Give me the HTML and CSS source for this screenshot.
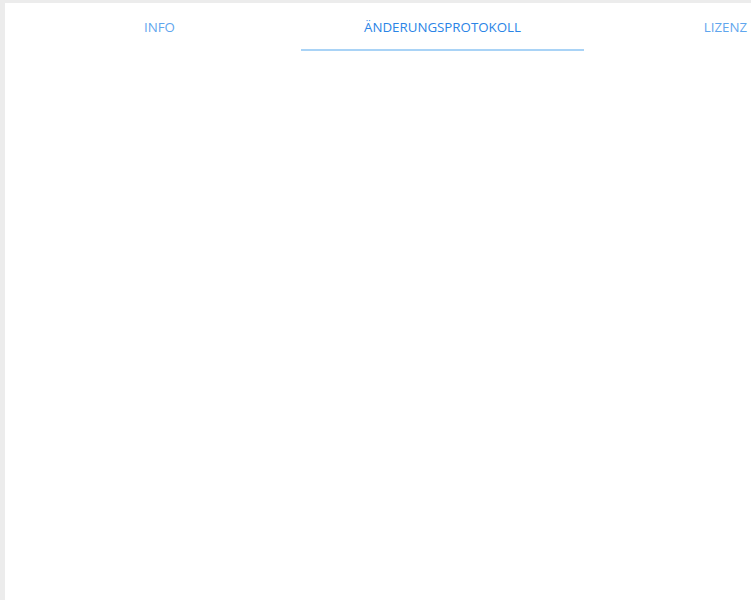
FILE: index.html
```html
<!DOCTYPE html>
<html lang="de">
<head>
<meta charset="utf-8">
<title>Tabs</title>
<link rel="stylesheet" href="styles.css">
</head>
<body>
<div class="panel">
  <nav class="tabs">
    <div class="tab">INFO</div>
    <div class="tab active">ÄNDERUNGSPROTOKOLL</div>
    <div class="tab">LIZENZ</div>
  </nav>
</div>
</body>
</html>
```
FILE: styles.css
```css
html, body {
  margin: 0;
  padding: 0;
  height: 100%;
  overflow: hidden;
}
body {
  background: #ececec;
  font-family: "Open Sans", "Noto Sans", sans-serif;
  padding: 3px 0 0 5px;
  box-sizing: border-box;
}
.panel {
  background: #ffffff;
  height: 100%;
  overflow: hidden;
}
.tabs {
  display: flex;
  padding-left: 13px;
  height: 48px;
}
.tab {
  flex: 0 0 283px;
  box-sizing: border-box;
  display: flex;
  align-items: center;
  justify-content: center;
  font-size: 13.3px;
  color: #5fa6ee;
  border-bottom: 2px solid transparent;
  padding-top: 2px;
}
.tab.active {
  color: #2a84e6;
  border-bottom-color: #a9d3f6;
}
```
